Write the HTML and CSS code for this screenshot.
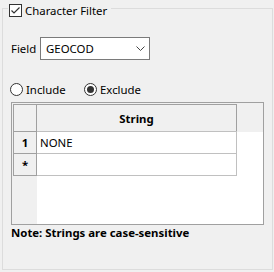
FILE: index.html
```html
<!DOCTYPE html>
<html lang="en">
<head>
  <meta charset="UTF-8">
  <title>Character Filter</title>
  <link rel="stylesheet" href="styles.css">
</head>
<body>
  <fieldset class="group">
    <legend class="group-title">
      <span class="check">
        <svg width="13" height="13" viewBox="0 0 13 13"><path d="M2.5 6.5 L5 9 L10.5 3.5" fill="none" stroke="#333" stroke-width="1.2"/></svg>
      </span>
      <span>Character Filter</span>
    </legend>

    <div class="field-row">
      <span class="field-label">Field</span>
      <div class="combo">
        <span>GEOCOD</span>
        <svg width="9" height="6" viewBox="0 0 9 6"><path d="M0.5 0.5 L4.5 4.5 L8.5 0.5" fill="none" stroke="#444" stroke-width="1"/></svg>
      </div>
    </div>

    <div class="radio-row">
      <label class="radio"><span class="dot"></span>Include</label>
      <label class="radio on"><span class="dot"></span>Exclude</label>
    </div>

    <div class="grid">
      <div class="grid-head">
        <div class="corner"></div>
        <div class="colhead">String</div>
      </div>
      <div class="grid-body">
        <div class="rowheads">
          <div class="rh">1</div>
          <div class="rh">*</div>
        </div>
        <div class="cells">
          <div class="cell">NONE</div>
          <div class="cell"></div>
        </div>
      </div>
    </div>

    <div class="note">Note: Strings are case-sensitive</div>
  </fieldset>
</body>
</html>
```

FILE: styles.css
```css
* { box-sizing: border-box; }
html, body {
  margin: 0; padding: 0;
  width: 100%; height: 100%;
  overflow: hidden;
}
body {
  background: #f0f0f0;
  color: #000;
  font-family: "Noto Sans", "Open Sans", sans-serif;
  font-size: 11.4px;
}

/* Групповая рамка */
.group {
  margin: 1px 1px 0 2px;
  padding: 0 0 0 8px;
  height: 269px;
  border: 1px solid #dcdcdc;
}
.group-title {
  display: flex;
  align-items: flex-start;
  height: 15px;
  margin-left: -3px;
  padding: 0 4px 0 1px;
  line-height: 15px;
}
.check {
  display: block;
  width: 13px; height: 13px;
  margin: 3px 3px 0 0;
  border: 1px solid #333;
  background: #fff;
}
.check svg { display: block; margin: -1px; }
.group-title span:last-child { margin-top: 2px; }

/* Поле */
.field-row {
  display: flex;
  align-items: center;
  margin-top: 21px;
  height: 23px;
}
.field-label { width: 29px; }
.combo {
  display: flex;
  align-items: center;
  justify-content: space-between;
  width: 110px; height: 23px;
  padding: 0 4px 0 5px;
  border: 1px solid #7a7a7a;
  background: #fff;
}

/* Переключатели */
.radio-row {
  display: flex;
  margin-top: 22px;
  height: 14px;
}
.radio {
  display: flex;
  align-items: center;
  width: 75px;
  margin-left: -1px;
}
.dot {
  width: 13px; height: 13px;
  margin-right: 3px;
  border: 1px solid #333;
  border-radius: 50%;
  background: #fff;
  position: relative;
}
.radio.on .dot::after {
  content: "";
  position: absolute;
  left: 2px; top: 2px;
  width: 7px; height: 7px;
  border-radius: 50%;
  background: #333;
}

/* Таблица */
.grid {
  display: flex;
  flex-direction: column;
  width: 253px; height: 123px;
  margin-top: 6px;
  padding: 1px 0 0 1px;
  border: 1px solid #a0a0a0;
  background: #fff;
}
.grid-head {
  display: flex;
  height: 29px;
  background: #f0f0f0;
  margin: -1px 0 0 -1px;
  padding: 1px 0 0 1px;
}
.corner, .colhead, .rh { border: 1px solid #a0a0a0; }
.corner { width: 24px; height: 28px; }
.colhead {
  width: 201px; height: 28px;
  margin-left: -1px;
  display: flex;
  align-items: center;
  justify-content: center;
  font-weight: bold;
}
.grid-body { display: flex; flex: 1; margin-top: -1px; }
.rowheads {
  width: 24px;
  background: #f0f0f0;
  margin-left: -1px;
  padding-left: 1px;
  box-sizing: content-box;
}
.rh {
  height: 23px;
  margin-bottom: -1px;
  display: flex;
  align-items: center;
  justify-content: center;
  font-weight: bold;
}
.cells { width: 200px; }
.cell {
  height: 23px;
  margin-bottom: -1px;
  padding-left: 3px;
  line-height: 21px;
  border: 1px solid #c0c0c0;
  border-left: 0;
}

.note {
  margin-top: 0;
  font-weight: bold;
}
```
